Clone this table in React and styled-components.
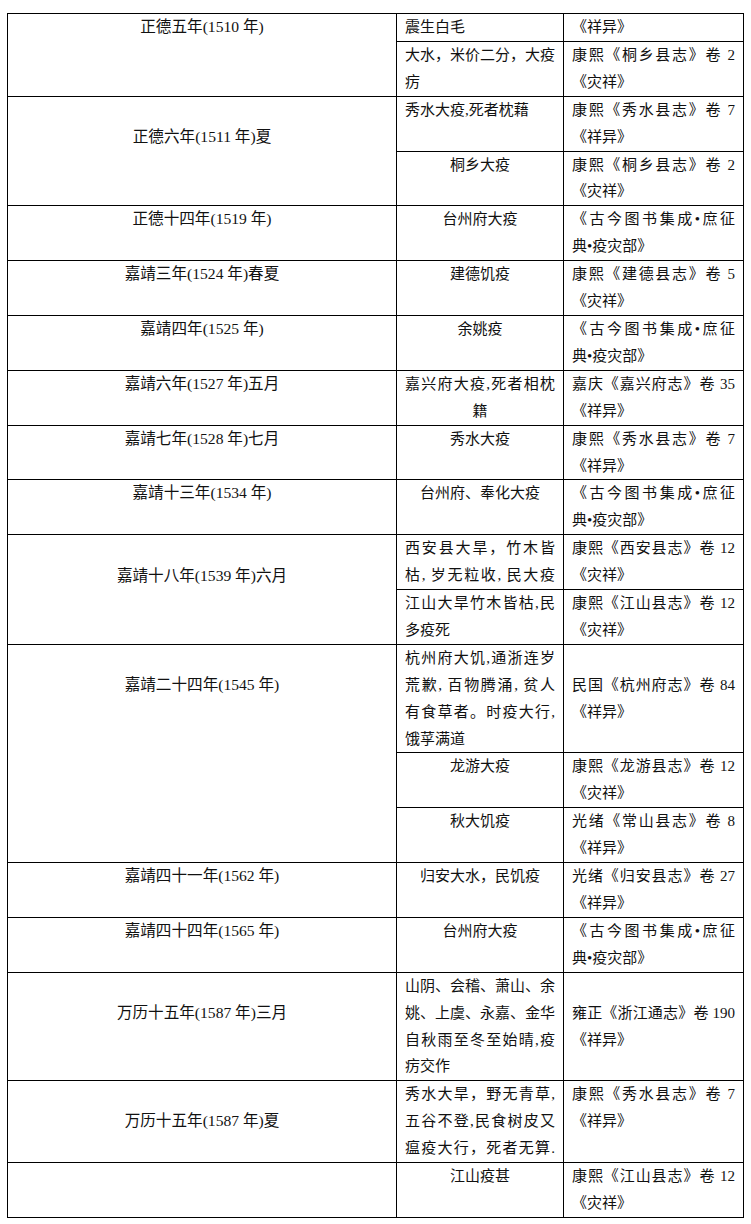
import React from "react";
import styled, { createGlobalStyle } from "styled-components";

const LINE = 26.9;

const GlobalStyle = createGlobalStyle`
  body {
    margin: 0;
    background: #fff;
    color: #111;
    font-family: "Liberation Serif", "Noto Sans CJK SC", serif;
  }
`;

const Page = styled.div`
  padding: 13px 0 0 7px;
`;

const Table = styled.div`
  display: grid;
  grid-template-columns: 388px 166px 179px;
  gap: 1px;
  width: max-content;
  background: #000;
  border: 1px solid #000;
  font-size: 15px;
  line-height: ${LINE}px;
`;

const Cell = styled.div`
  background: #fff;
  display: flex;
  flex-direction: column;
  min-width: 0;
  grid-row: ${(p) => `${p.$row} / span ${p.$span || 1}`};
`;

const DateCell = styled(Cell)`
  grid-column: 1;
  text-align: center;
  font-size: 15.6px;
  justify-content: ${(p) => (p.$middle ? "center" : "flex-start")};
  padding-top: ${(p) => (p.$lead || 0) * LINE}px;
  padding-bottom: ${(p) => (p.$trail || 0) * LINE}px;
`;

const EventCell = styled(Cell)`
  grid-column: 2;
  padding: 0 8px;
`;

const SourceCell = styled(Cell)`
  grid-column: 3;
  padding: 0 8px;
  justify-content: ${(p) => (p.$middle ? "center" : "flex-start")};
`;

const Line = styled.div`
  white-space: nowrap;
  text-align: ${(p) => p.$align};
  text-align-last: ${(p) => p.$align};
`;

const SRC_GZ = ["《古今图书集成•庶征", "典•疫灾部》"];

const groups = [
  {
    date: "正德五年(1510 年)",
    rows: [
      { ev: ["震生白毛"], src: ["《祥异》"] },
      { ev: ["大水，米价二分，大疫", "疠"], src: ["康熙《桐乡县志》卷 2", "《灾祥》"] },
    ],
  },
  {
    date: "正德六年(1511 年)夏",
    middle: true,
    trail: 1,
    rows: [
      { ev: ["秀水大疫,死者枕藉"], src: ["康熙《秀水县志》卷 7", "《祥异》"] },
      { ev: ["桐乡大疫"], align: "center", src: ["康熙《桐乡县志》卷 2", "《灾祥》"] },
    ],
  },
  { date: "正德十四年(1519 年)", rows: [{ ev: ["台州府大疫"], align: "center", src: SRC_GZ }] },
  {
    date: "嘉靖三年(1524 年)春夏",
    rows: [{ ev: ["建德饥疫"], align: "center", src: ["康熙《建德县志》卷 5", "《灾祥》"] }],
  },
  { date: "嘉靖四年(1525 年)", rows: [{ ev: ["余姚疫"], align: "center", src: SRC_GZ }] },
  {
    date: "嘉靖六年(1527 年)五月",
    rows: [
      { ev: ["嘉兴府大疫,死者相枕", "籍"], align: "center", src: ["嘉庆《嘉兴府志》卷 35", "《祥异》"] },
    ],
  },
  {
    date: "嘉靖七年(1528 年)七月",
    rows: [{ ev: ["秀水大疫"], align: "center", src: ["康熙《秀水县志》卷 7", "《祥异》"] }],
  },
  { date: "嘉靖十三年(1534 年)", rows: [{ ev: ["台州府、奉化大疫"], align: "center", src: SRC_GZ }] },
  {
    date: "嘉靖十八年(1539 年)六月",
    middle: true,
    trail: 1,
    rows: [
      {
        ev: ["西安县大旱，竹木皆", "枯, 岁无粒收, 民大疫"],
        align: "justify",
        src: ["康熙《西安县志》卷 12", "《灾祥》"],
      },
      { ev: ["江山大旱竹木皆枯,民", "多疫死"], src: ["康熙《江山县志》卷 12", "《灾祥》"] },
    ],
  },
  {
    date: "嘉靖二十四年(1545 年)",
    lead: 1,
    rows: [
      {
        ev: ["杭州府大饥,通浙连岁", "荒歉, 百物腾涌, 贫人", "有食草者。时疫大行,", "饿莩满道"],
        src: ["民国《杭州府志》卷 84", "《祥异》"],
        srcMiddle: true,
      },
      { ev: ["龙游大疫"], align: "center", src: ["康熙《龙游县志》卷 12", "《灾祥》"] },
      { ev: ["秋大饥疫"], align: "center", src: ["光绪《常山县志》卷 8", "《祥异》"] },
    ],
  },
  {
    date: "嘉靖四十一年(1562 年)",
    rows: [{ ev: ["归安大水，民饥疫"], align: "center", src: ["光绪《归安县志》卷 27", "《祥异》"] }],
  },
  { date: "嘉靖四十四年(1565 年)", rows: [{ ev: ["台州府大疫"], align: "center", src: SRC_GZ }] },
  {
    date: "万历十五年(1587 年)三月",
    middle: true,
    trail: 1,
    rows: [
      {
        ev: ["山阴、会稽、萧山、余", "姚、上虞、永嘉、金华", "自秋雨至冬至始晴,疫", "疠交作"],
        src: ["雍正《浙江通志》卷 190", "《祥异》"],
        srcMiddle: true,
      },
    ],
  },
  {
    date: "万历十五年(1587 年)夏",
    middle: true,
    rows: [
      {
        ev: ["秀水大旱，野无青草,", "五谷不登,民食树皮又", "瘟疫大行，死者无算."],
        align: "justify",
        src: ["康熙《秀水县志》卷 7", "《祥异》"],
      },
    ],
  },
  {
    date: "",
    rows: [{ ev: ["江山疫甚"], align: "center", src: ["康熙《江山县志》卷 12", "《灾祥》"] }],
  },
];

function Lines({ lines, last = "left" }) {
  return lines.map((text, i) => (
    <Line key={i} $align={i < lines.length - 1 ? "justify" : last}>
      {text}
    </Line>
  ));
}

function App() {
  let row = 1;
  const cells = [];

  groups.forEach((g, gi) => {
    const start = row;
    cells.push(
      <DateCell
        key={`d${gi}`}
        $row={start}
        $span={g.rows.length}
        $middle={g.middle}
        $lead={g.lead}
        $trail={g.trail}
      >
        {g.date && <Line $align="center">{g.date}</Line>}
      </DateCell>
    );
    g.rows.forEach((r, ri) => {
      cells.push(
        <EventCell key={`e${gi}-${ri}`} $row={row}>
          <Lines lines={r.ev} last={r.align || "left"} />
        </EventCell>
      );
      cells.push(
        <SourceCell key={`s${gi}-${ri}`} $row={row} $middle={r.srcMiddle}>
          <Lines lines={r.src} />
        </SourceCell>
      );
      row += 1;
    });
  });

  return (
    <Page>
      <GlobalStyle />
      <Table>{cells}</Table>
    </Page>
  );
}

export default App;
